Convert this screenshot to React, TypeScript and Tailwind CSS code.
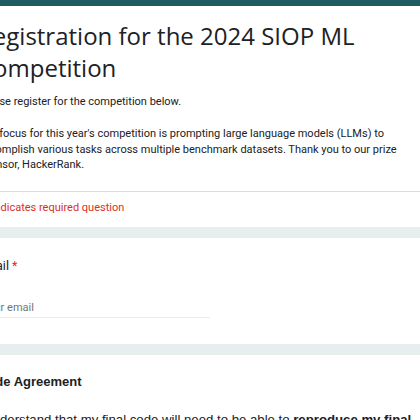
export default function App() {
  return (
    <div className="h-[420px] w-[420px] overflow-hidden bg-[#e6eeee] font-['Roboto',sans-serif] text-[#202124]">
      <div className="ml-[-41px] flex w-[520px] flex-col gap-[11px]">
        {/* header card */}
        <div className="border-t-[6px] border-[#1d5c60] bg-white">
          <div className="px-[19px] pt-[14px] pb-[18px]">
            <h1 className="font-['Open_Sans',sans-serif] text-[24px] leading-[32px] whitespace-nowrap">
              <span className="block">Registration for the 2024 SIOP ML</span>
              <span className="block">Competition</span>
            </h1>
            <div className="mt-[10px] text-[11px] leading-[15.6px] whitespace-nowrap">
              <p>Please register for the competition below.</p>
              <p className="h-[16.6px]" />
              <p>The focus for this year's competition is prompting large language models (LLMs) to</p>
              <p>accomplish various tasks across multiple benchmark datasets. Thank you to our prize</p>
              <p>sponsor, HackerRank.</p>
            </div>
          </div>
          <div className="border-t border-[#dadce0] pl-[25px] pt-[8px] pb-[12px] text-[11px] leading-[15px] text-[#d93025]">
            * Indicates required question
          </div>
        </div>

        {/* email */}
        <div className="bg-white px-[19px] pt-[20px] pb-[26px]">
          <div className="text-[12.5px] leading-[16px]">
            Email <span className="text-[#d93025]">*</span>
          </div>
          <div className="mt-[26px] w-[232px] border-b border-[#e8eaed] pb-[2px] pl-[4px] text-[11px] leading-[15px] text-[#70757a]">
            Your email
          </div>
        </div>

        {/* code agreement */}
        <div className="bg-white px-[19px] pt-[19px] font-['Liberation_Sans',sans-serif]">
          <div className="text-[13px] leading-[16px] font-bold">Code Agreement</div>
          <p className="mt-[22px] text-[13.2px] leading-[16px] whitespace-nowrap">
            I understand that my final code will need to be able to <b>reproduce my final</b>
          </p>
        </div>
      </div>
    </div>
  );
}
